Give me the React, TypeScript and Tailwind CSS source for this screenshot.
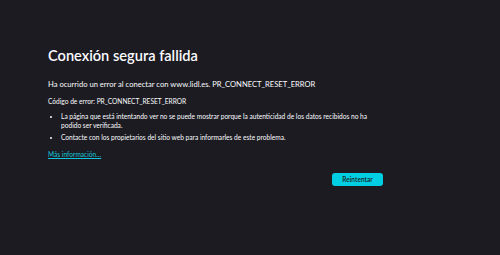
export default function App() {
  return (
    <div className="w-[500px] h-[255px] bg-[#1c1b22] text-[#fbfbfe] font-['Lato',sans-serif] overflow-hidden">
      <div className="pt-[46px] pl-[48px] w-[384px]">
        <h1 className="text-[14.6px] leading-[20px] font-semibold">Conexión segura fallida</h1>
        <p className="mt-[13px] text-[7.6px] leading-[10px]">
          Ha ocurrido un error al conectar con www.lidl.es. PR_CONNECT_RESET_ERROR
        </p>
        <p className="mt-[8px] text-[6.6px] leading-[9px]">Código de error: PR_CONNECT_RESET_ERROR</p>
        <ul className="mt-[6px] pl-[13px] list-disc text-[6.6px] leading-[9px] pr-[12px]">
          <li>
            La página que está intentando ver no se puede mostrar porque la autenticidad de los datos recibidos no ha podido ser verificada.
          </li>
          <li className="mt-[3px]">Contacte con los propietarios del sitio web para informarles de este problema.</li>
        </ul>
        <a href="#" className="block mt-[8px] text-[6.6px] leading-[9px] text-[#14c6dc] underline">
          Más información…
        </a>
        <div className="flex justify-end mt-[14px] pr-[1px]">
          <button className="w-[51px] h-[13px] rounded-[3px] bg-[#00cfe3] text-[#1c1b22] text-[6.6px] font-semibold leading-[13px]">
            Reintentar
          </button>
        </div>
      </div>
    </div>
  )
}
